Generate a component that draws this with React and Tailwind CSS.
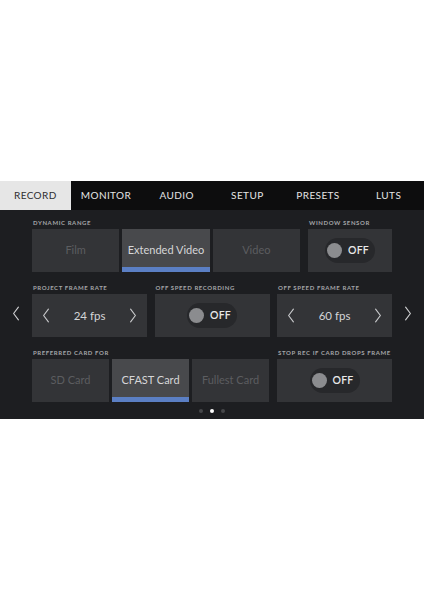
import React from "react";

const tabs = ["RECORD", "MONITOR", "AUDIO", "SETUP", "PRESETS", "LUTS"];

const Label = ({ children }) => (
  <div className="h-[8px] mb-[2px] pl-[1px] text-[6px] leading-[8px] font-bold tracking-[0.6px] text-[#a3a4a7]">
    {children}
  </div>
);

const Chevron = ({ dir = "left", className = "" }) => (
  <svg
    viewBox="0 0 10 18"
    className={className}
    fill="none"
    stroke="currentColor"
    strokeWidth="1.4"
    strokeLinecap="round"
    strokeLinejoin="round"
  >
    {dir === "left" ? <path d="M8 1 L2 9 L8 17" /> : <path d="M2 1 L8 9 L2 17" />}
  </svg>
);

const Toggle = () => (
  <div className="flex items-center h-[25px] w-[50px] rounded-full bg-[#27282b] pl-[2px] gap-[6px]">
    <div className="w-[15px] h-[15px] rounded-full bg-[#8b8c8f]" />
    <span className="text-[10.5px] font-semibold text-[#e8e8e8] tracking-[0.2px]">OFF</span>
  </div>
);

const Segment = ({ children, active }) => (
  <div
    className={
      "relative flex-1 flex items-center justify-center text-[11px] " +
      (active ? "bg-[#48494c] text-[#d6d6d8]" : "bg-[#333437] text-[#5c5d60]")
    }
  >
    {children}
    {active && <div className="absolute left-0 right-0 bottom-0 h-[5px] bg-[#5b7fc4]" />}
  </div>
);

const Stepper = ({ value }) => (
  <div className="flex items-center justify-between h-[43px] bg-[#333437] px-[10px] text-[#c9cacc]">
    <Chevron dir="left" className="w-[8px] h-[15px]" />
    <span className="text-[11.5px] text-[#d4d5d7]">{value}</span>
    <Chevron dir="right" className="w-[8px] h-[15px]" />
  </div>
);

const ToggleBox = () => (
  <div className="flex items-center justify-center h-[43px] bg-[#333437]">
    <Toggle />
  </div>
);

export default function App() {
  return (
    <div
      className="w-[424px] h-[600px] bg-white pt-[181px]"
      style={{ fontFamily: "Lato, 'Open Sans', sans-serif" }}
    >
      {/* Tabs */}
      <div className="grid grid-cols-6 h-[29px] bg-[#0d0d0e]">
        {tabs.map((t, i) => (
          <div
            key={t}
            className={
              "flex items-center justify-center text-[10px] tracking-[0.4px] " +
              (i === 0 ? "bg-[#e6e6e6] text-[#2e2e30]" : "text-[#e4e4e4]")
            }
          >
            {t}
          </div>
        ))}
      </div>

      {/* Body */}
      <div className="flex h-[209px] bg-[#1d1e21]">
        <div className="w-[32px] flex items-start justify-center pt-[96px] text-[#cfd0d2]">
          <Chevron dir="left" className="w-[8px] h-[15px]" />
        </div>

        <div className="w-[360px] pt-[9px]">
          {/* Row 1 */}
          <div className="flex gap-[8px]">
            <div className="w-[268px]">
              <Label>DYNAMIC RANGE</Label>
              <div className="flex gap-[3px] h-[43px]">
                <Segment>Film</Segment>
                <Segment active>Extended Video</Segment>
                <Segment>Video</Segment>
              </div>
            </div>
            <div className="w-[84px]">
              <Label>WINDOW SENSOR</Label>
              <ToggleBox />
            </div>
          </div>

          {/* Row 2 */}
          <div className="grid grid-cols-3 gap-x-[7.5px] mt-[12px]">
            <div>
              <Label>PROJECT FRAME RATE</Label>
              <Stepper value="24 fps" />
            </div>
            <div>
              <Label>OFF SPEED RECORDING</Label>
              <ToggleBox />
            </div>
            <div>
              <Label>OFF SPEED FRAME RATE</Label>
              <Stepper value="60 fps" />
            </div>
          </div>

          {/* Row 3 */}
          <div className="flex gap-[8px] mt-[12px]">
            <div className="w-[237px]">
              <Label>PREFERRED CARD FOR</Label>
              <div className="flex gap-[3px] h-[43px]">
                <Segment>SD Card</Segment>
                <Segment active>CFAST Card</Segment>
                <Segment>Fullest Card</Segment>
              </div>
            </div>
            <div className="flex-1">
              <Label>STOP REC IF CARD DROPS FRAME</Label>
              <ToggleBox />
            </div>
          </div>

          {/* Page dots */}
          <div className="flex justify-center items-center gap-[7px] mt-[7px]">
            <div className="w-[4px] h-[4px] rounded-full bg-[#46474a]" />
            <div className="w-[4px] h-[4px] rounded-full bg-white" />
            <div className="w-[4px] h-[4px] rounded-full bg-[#46474a]" />
          </div>
        </div>

        <div className="w-[32px] flex items-start justify-center pt-[96px] text-[#cfd0d2]">
          <Chevron dir="right" className="w-[8px] h-[15px]" />
        </div>
      </div>
    </div>
  );
}
